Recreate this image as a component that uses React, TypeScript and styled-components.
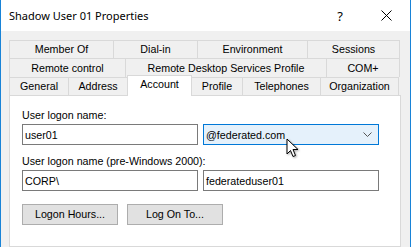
import styled, { createGlobalStyle } from 'styled-components'

const GlobalStyle = createGlobalStyle`
  html, body {
    margin: 0;
    padding: 0;
    background: #ffffff;
  }
  body {
    font-family: "Liberation Sans", Arial, sans-serif;
    font-size: 10.7px;
    color: #000;
  }
`

type TabDef = { label: string; width: number; active?: boolean }

const rows: { tabs: TabDef[]; height: number }[] = [
  {
    height: 18,
    tabs: [
      { label: 'Member Of', width: 104 },
      { label: 'Dial-in', width: 84 },
      { label: 'Environment', width: 110 },
      { label: 'Sessions', width: 93 },
    ],
  },
  {
    height: 19,
    tabs: [
      { label: 'Remote control', width: 116 },
      { label: 'Remote Desktop Services Profile', width: 201 },
      { label: 'COM+', width: 74 },
    ],
  },
  {
    height: 18,
    tabs: [
      { label: 'General', width: 59 },
      { label: 'Address', width: 59 },
      { label: 'Account', width: 65, active: true },
      { label: 'Profile', width: 51 },
      { label: 'Telephones', width: 78 },
      { label: 'Organization', width: 79 },
    ],
  },
]

function App() {
  return (
    <>
      <GlobalStyle />
      <Window>
        <TitleBar>
          <Title>Shadow User 01 Properties</Title>
          <TitleButton>?</TitleButton>
          <TitleButton>
            <svg width="11" height="11" viewBox="0 0 11 11">
              <path d="M0.5 0.5 L10.5 10.5 M10.5 0.5 L0.5 10.5" stroke="#000" strokeWidth="1" fill="none" />
            </svg>
          </TitleButton>
        </TitleBar>
        <Body>
          <TabStrip>
            {rows.map((row, i) => (
              <TabRow key={i} $height={row.height}>
                {row.tabs.map((t) => (
                  <Tab key={t.label} $width={t.width} $active={t.active}>
                    {t.label}
                  </Tab>
                ))}
              </TabRow>
            ))}
          </TabStrip>
          <Panel>
            <Label>User logon name:</Label>
            <FieldRow>
              <TextBox>user01</TextBox>
              <Combo>
                <span>@federated.com</span>
                <svg width="9" height="5" viewBox="0 0 9 5">
                  <path d="M0.5 0.5 L4.5 4.5 L8.5 0.5" stroke="#555" strokeWidth="1" fill="none" />
                </svg>
                <Cursor width="14" height="21" viewBox="0 0 14 21">
                  <path
                    d="M1 1 L1 16 L4.5 12.5 L7 18.5 L9.5 17.5 L7 11.5 L12 11.5 Z"
                    fill="#fff"
                    stroke="#000"
                    strokeWidth="1"
                    strokeLinejoin="miter"
                  />
                </Cursor>
              </Combo>
            </FieldRow>
            <Label>User logon name (pre-Windows 2000):</Label>
            <FieldRow>
              <TextBox>CORP\</TextBox>
              <TextBox>federateduser01</TextBox>
            </FieldRow>
            <ButtonRow>
              <Button $width={96}>Logon Hours...</Button>
              <Button $width={96}>Log On To...</Button>
            </ButtonRow>
          </Panel>
        </Body>
      </Window>
    </>
  )
}

const Window = styled.div`
  width: 411px;
  height: 247px;
  box-sizing: border-box;
  border-left: 1px solid #1883d7;
  border-right: 1px solid #1883d7;
  display: flex;
  flex-direction: column;
  overflow: hidden;
  background: #f0f0f0;
`

const TitleBar = styled.div`
  height: 31px;
  flex: none;
  background: #ffffff;
  display: flex;
  align-items: center;
  padding-left: 8px;
`

const Title = styled.div`
  flex: 1;
  font-family: "Noto Sans", "Open Sans", sans-serif;
  font-size: 11px;
  color: #000;
  padding-bottom: 1px;
`

const TitleButton = styled.div`
  width: 46px;
  height: 31px;
  display: flex;
  align-items: center;
  justify-content: center;
  font-family: "Noto Sans", sans-serif;
  font-size: 13px;
  &:last-child {
    margin-right: 1px;
  }
`

const Body = styled.div`
  flex: 1;
  padding: 9px 9px 0 8px;
  display: flex;
  flex-direction: column;
`

const TabStrip = styled.div`
  display: flex;
  flex-direction: column;
`

const TabRow = styled.div<{ $height: number }>`
  display: flex;
  height: ${(p) => p.$height}px;
`

const Tab = styled.div<{ $width: number; $active?: boolean }>`
  box-sizing: border-box;
  width: ${(p) => p.$width}px;
  border-top: 1px solid #d9d9d9;
  border-left: 1px solid #d9d9d9;
  background: #f0f0f0;
  display: flex;
  align-items: center;
  justify-content: center;
  padding-bottom: 1px;
  white-space: nowrap;
  &:last-child {
    border-right: 1px solid #d9d9d9;
  }
  ${(p) =>
    p.$active &&
    `
    position: relative;
    top: -2px;
    height: calc(100% + 3px);
    background: #ffffff;
    border-right: 1px solid #d9d9d9;
    margin-right: -1px;
    z-index: 2;
    padding-bottom: 4px;
  `}
`

const Panel = styled.div`
  flex: 1;
  box-sizing: border-box;
  background: #ffffff;
  border: 1px solid #d9d9d9;
  padding: 12px 13px 0 12px;
  display: flex;
  flex-direction: column;
`

const Label = styled.div`
  height: 15px;
  line-height: 14px;
  margin-bottom: 1px;
`

const FieldRow = styled.div`
  display: flex;
  gap: 5px;
  margin-bottom: 9px;
`

const TextBox = styled.div`
  box-sizing: border-box;
  width: 176px;
  height: 21px;
  border: 1px solid #7a7a7a;
  background: #fff;
  display: flex;
  align-items: center;
  padding-left: 2px;
  white-space: nowrap;
`

const Combo = styled.div`
  position: relative;
  box-sizing: border-box;
  width: 176px;
  height: 21px;
  border: 1px solid #0078d7;
  background: #e5f1fb;
  display: flex;
  align-items: center;
  justify-content: space-between;
  padding: 0 6px 0 2px;
`

const Cursor = styled.svg`
  position: absolute;
  left: 82px;
  top: 13px;
  filter: drop-shadow(1px 1px 1px rgba(0, 0, 0, 0.35));
`

const ButtonRow = styled.div`
  display: flex;
  gap: 9px;
  margin-top: 4px;
`

const Button = styled.div<{ $width: number }>`
  box-sizing: border-box;
  width: ${(p) => p.$width}px;
  height: 21px;
  border: 1px solid #adadad;
  background: #e1e1e1;
  display: flex;
  align-items: center;
  justify-content: center;
  padding-bottom: 1px;
`

export default App
